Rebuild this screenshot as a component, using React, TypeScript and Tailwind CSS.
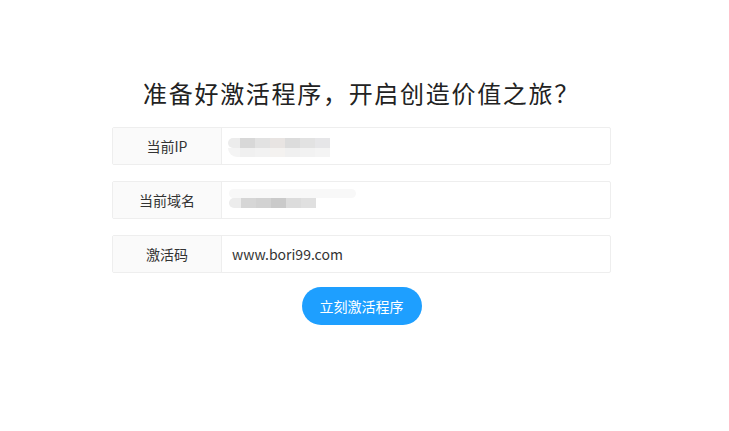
import React from 'react';

const font = { fontFamily: '"Microsoft YaHei", "Noto Sans CJK SC", "Liberation Sans", sans-serif' };

const Mosaic: React.FC<{ top: string[]; bottom?: string[]; band?: boolean }> = ({ top, bottom, band }) => (
  <div className="relative flex flex-col">
    {band && <div className="h-[9px] w-[127px] rounded-full bg-[#f8f8f8]" />}
    <div className="flex">
      <div className="h-[10px] w-[12px] rounded-l-full bg-[#ececec]" />
      {top.map((c, i) => (
        <div key={i} className="h-[10px] w-[15px]" style={{ background: c }} />
      ))}
    </div>
    {bottom && (
      <div className="flex">
        <div className="h-[9px] w-[12px] rounded-bl-full bg-[#f4f4f4]" />
        {bottom.map((c, i) => (
          <div key={i} className="h-[9px] w-[15px]" style={{ background: c }} />
        ))}
      </div>
    )}
  </div>
);

const Row: React.FC<{ label: string; children?: React.ReactNode }> = ({ label, children }) => (
  <div className="flex h-[38px] w-[499px] border border-[#eeeeee] rounded-[2px]">
    <div className="flex w-[109px] items-center justify-center border-r border-[#eeeeee] bg-[#fafafa] text-[14px] text-[#333]">
      {label}
    </div>
    <div className="flex flex-1 items-center pl-[10px] text-[14px] text-[#333]">{children}</div>
  </div>
);

export default function App() {
  return (
    <div className="min-h-[431px] w-full bg-white pr-[6px]" style={font}>
      <div className="flex flex-col items-center pt-[75px]">
        <h1 className="text-[24px] leading-[35px] text-[#222] tracking-[1.7px]">准备好激活程序，开启创造价值之旅？</h1>
        <div className="mt-[17px] flex flex-col gap-[16px]">
          <Row label="当前IP">
            <div className="-ml-[4px] mt-[2px]">
              <Mosaic
                top={['#d8d8d8', '#e2e2e2', '#e8e4e2', '#dcdcdc', '#e2e2e2', '#e6e6e8']}
                bottom={['#f0f0f0', '#f2f2f2', '#f4f2f0', '#f0f0f0', '#f2f2f2', '#f4f4f4']}
              />
            </div>
          </Row>
          <Row label="当前域名">
            <div className="-ml-[3px] mt-[-4px]">
              <Mosaic band top={['#d6d6d6', '#d2d2d2', '#cacaca', '#dcdcdc', '#e0e0e0']} />
            </div>
          </Row>
          <Row label="激活码">www.bori99.com</Row>
        </div>
        <button className="mt-[14px] h-[38px] w-[120px] rounded-full bg-[#1e9fff] text-[14px] text-white">
          立刻激活程序
        </button>
      </div>
    </div>
  );
}
